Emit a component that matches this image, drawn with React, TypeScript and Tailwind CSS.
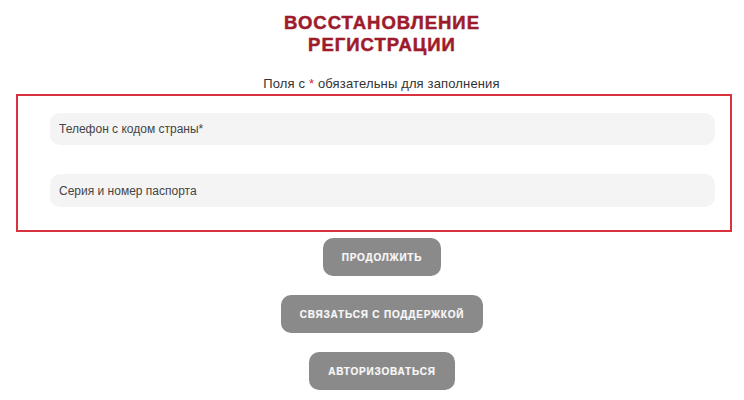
import React from 'react';

const buttons = ['ПРОДОЛЖИТЬ', 'СВЯЗАТЬСЯ С ПОДДЕРЖКОЙ', 'АВТОРИЗОВАТЬСЯ'];

export default function App() {
    return (
        <div className="w-[744px] h-[400px] bg-white overflow-hidden font-['Liberation_Sans',Arial,sans-serif]">
            <h1 className="pt-[12px] pl-[20px] text-center text-[18.5px] leading-[22px] font-bold tracking-[1px] text-[#9e1b2b] [-webkit-text-stroke:0.5px_#9e1b2b]">
                ВОССТАНОВЛЕНИЕ
                <br />
                РЕГИСТРАЦИИ
            </h1>
            <p className="mt-[20px] pl-[19px] text-center text-[13px] leading-[16px] tracking-[0.15px] text-[#333]">
                Поля с <span className="text-[#e0283a]">*</span> обязательны для заполнения
            </p>
            <div className="mt-[2px] ml-[16px] w-[716px] h-[138px] border-2 border-[#d9323f] pl-[32px] pr-[15px] pt-[17px] flex flex-col gap-[29px]">
                <input
                    className="h-[32px] w-full rounded-[10px] bg-[#f4f4f4] px-[9px] text-[12px] text-[#444] placeholder:text-[#444] outline-none"
                    placeholder="Телефон с кодом страны*"
                />
                <input
                    className="h-[33px] w-full rounded-[10px] bg-[#f4f4f4] px-[9px] text-[12px] text-[#444] placeholder:text-[#444] outline-none"
                    placeholder="Серия и номер паспорта"
                />
            </div>
            <div className="mt-[6px] pl-[20px] flex flex-col items-center gap-[19px]">
                {buttons.map((b) => (
                    <button
                        key={b}
                        className="h-[38px] px-[19px] rounded-[10px] bg-[#8a8a8a] text-[#f8f8f8] text-[10px] font-bold tracking-[0.8px] [-webkit-text-stroke:0.2px_#f8f8f8]"
                    >
                        {b}
                    </button>
                ))}
            </div>
        </div>
    );
}
